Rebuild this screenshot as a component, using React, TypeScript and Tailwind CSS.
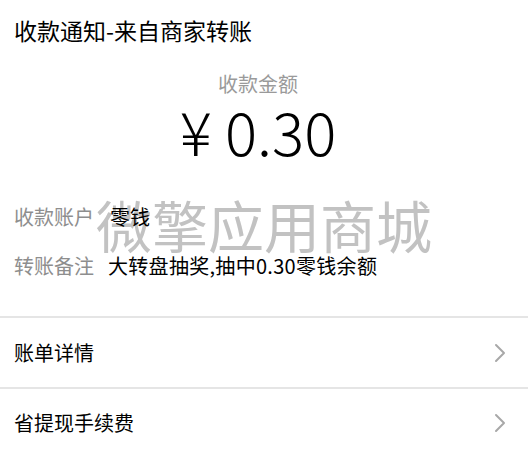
import React from "react";

const cjk = { fontFamily: '"Noto Sans CJK SC", "Noto Sans", sans-serif' };

function Chevron() {
  return (
    <svg width="12" height="20" viewBox="0 0 12 20" fill="none">
      <path d="M2 2 L10 10 L2 18" stroke="#a8a8a8" strokeWidth="2" strokeLinecap="round" strokeLinejoin="round" />
    </svg>
  );
}

export default function App() {
  return (
    <div className="relative w-[528px] h-[456px] bg-white overflow-hidden text-black" style={cjk}>
      <div className="absolute left-[96px] top-[192px] text-[56px] leading-[64px] text-[#c2c2c2] pointer-events-none">
        微擎应用商城
      </div>
      <div className="relative">
        <div className="pl-[14px] pt-[14px] text-[23px] leading-[32px]">收款通知-来自商家转账</div>
        <div className="w-[516px] mt-[24px] text-center text-[20px] leading-[28px] text-[#9a9a9a]">收款金额</div>
        <div className="w-[516px] mt-[-1px] text-center text-[60px] leading-[66px] font-light">¥ 0.30</div>
        <div className="mt-[40px] pl-[14px] flex flex-col gap-[21px]">
          <div className="flex items-center text-[20px] leading-[28px]">
            <span className="text-[#8e8e8e] w-[96px]">收款账户</span>
            <span>零钱</span>
          </div>
          <div className="flex items-center text-[20px] leading-[28px]">
            <span className="text-[#8e8e8e] w-[94px]">转账备注</span>
            <span className="tracking-[0.3px]">大转盘抽奖,抽中0.30零钱余额</span>
          </div>
        </div>
        <div className="mt-[36px] border-t-2 border-[#e5e5e5]">
          <div className="h-[69px] flex items-center justify-between pl-[14px] pr-[22px] text-[20px]">
            <span>账单详情</span>
            <Chevron />
          </div>
          <div className="border-t-2 border-[#e5e5e5] h-[69px] flex items-center justify-between pl-[14px] pr-[22px] text-[20px]">
            <span>省提现手续费</span>
            <Chevron />
          </div>
        </div>
      </div>
    </div>
  );
}
